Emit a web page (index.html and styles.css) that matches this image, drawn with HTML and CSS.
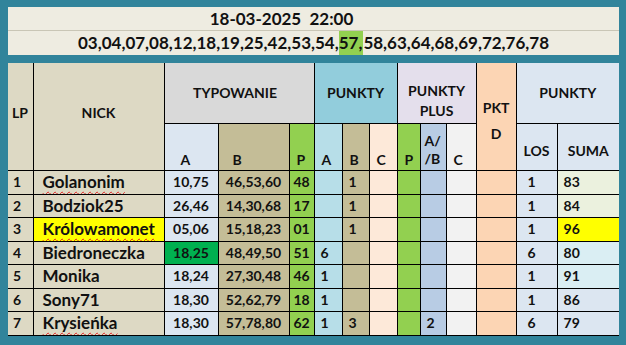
FILE: index.html
```html
<!DOCTYPE html>
<html lang="pl">
<head>
<meta charset="utf-8">
<title>Typowanie 18-03-2025</title>
<link rel="stylesheet" href="styles.css">
</head>
<body>
<div class="frame">
  <div class="draw">
    <div class="draw-date">18-03-2025  22:00</div>
    <div class="draw-nums"><span>03,04,07,08,12,18,19,25,42,53,54,</span><span class="hit">57,</span><span>58,63,64,68,69,72,76,78</span></div>
  </div>
  <table class="score">
    <colgroup>
      <col style="width:25px"><col style="width:131px"><col style="width:54px"><col style="width:71px"><col style="width:25px">
      <col style="width:28px"><col style="width:27px"><col style="width:28px">
      <col style="width:23px"><col style="width:26px"><col style="width:30px">
      <col style="width:40px"><col style="width:41px"><col style="width:62px">
    </colgroup>
    <thead>
      <tr class="h1">
        <th rowspan="2" class="lp-h tan">LP</th>
        <th rowspan="2" class="nick-h tan">NICK</th>
        <th colspan="3" class="grey mid typ">TYPOWANIE</th>
        <th colspan="3" class="aqua mid">PUNKTY</th>
        <th colspan="3" class="lav bot">PUNKTY<br>PLUS</th>
        <th rowspan="2" class="peach pktd"><span class="l1">PKT</span><span class="l2">D</span></th>
        <th colspan="2" class="lblue mid last">PUNKTY</th>
      </tr>
      <tr class="h2">
        <th class="lblue sub wide">A</th>
        <th class="khaki sub wide2">B</th>
        <th class="green sub">P</th>
        <th class="cyan sub">A</th>
        <th class="khaki sub">B</th>
        <th class="rose sub">C</th>
        <th class="green sub">P</th>
        <th class="steel sub ab">A/<br>/B</th>
        <th class="light sub">C</th>
        <th class="lblue ctr">LOS</th>
        <th class="lblue ctr last">SUMA</th>
      </tr>
    </thead>
    <tbody>
      <tr>
        <td class="tan lp">1</td><td class="tan nick"><span class="typo">Golanonim</span></td>
        <td class="lblue c">10,75</td><td class="khaki c">46,53,60</td><td class="green c">48</td>
        <td class="cyan n"></td><td class="khaki n">1</td><td class="rose n"></td>
        <td class="green n"></td><td class="steel n"></td><td class="light n"></td>
        <td class="peach"></td><td class="lblue los">1</td><td class="mint n last">83</td>
      </tr>
      <tr>
        <td class="tan lp">2</td><td class="tan nick">Bodziok25</td>
        <td class="lblue c">26,46</td><td class="khaki c">14,30,68</td><td class="green c">17</td>
        <td class="cyan n"></td><td class="khaki n">1</td><td class="rose n"></td>
        <td class="green n"></td><td class="steel n"></td><td class="light n"></td>
        <td class="peach"></td><td class="lblue los">1</td><td class="mint n last">84</td>
      </tr>
      <tr>
        <td class="tan lp">3</td><td class="yellow nick"><span class="typo">Królowamonet</span></td>
        <td class="lblue c">05,06</td><td class="khaki c">15,18,23</td><td class="green c">01</td>
        <td class="cyan n"></td><td class="khaki n">1</td><td class="rose n"></td>
        <td class="green n"></td><td class="steel n"></td><td class="light n"></td>
        <td class="peach"></td><td class="lblue los">1</td><td class="yellow n last">96</td>
      </tr>
      <tr>
        <td class="tan lp">4</td><td class="tan nick">Biedroneczka</td>
        <td class="dgreen c">18,25</td><td class="khaki c">48,49,50</td><td class="green c">51</td>
        <td class="cyan n">6</td><td class="khaki n"></td><td class="rose n"></td>
        <td class="green n"></td><td class="steel n"></td><td class="light n"></td>
        <td class="peach"></td><td class="lblue los">6</td><td class="sky n last">80</td>
      </tr>
      <tr>
        <td class="tan lp">5</td><td class="tan nick">Monika</td>
        <td class="lblue c">18,24</td><td class="khaki c">27,30,48</td><td class="green c">46</td>
        <td class="cyan n">1</td><td class="khaki n"></td><td class="rose n"></td>
        <td class="green n"></td><td class="steel n"></td><td class="light n"></td>
        <td class="peach"></td><td class="lblue los">1</td><td class="sky n last">91</td>
      </tr>
      <tr>
        <td class="tan lp">6</td><td class="tan nick">Sony71</td>
        <td class="lblue c">18,30</td><td class="khaki c">52,62,79</td><td class="green c">18</td>
        <td class="cyan n">1</td><td class="khaki n"></td><td class="rose n"></td>
        <td class="green n"></td><td class="steel n"></td><td class="light n"></td>
        <td class="peach"></td><td class="lblue los">1</td><td class="lblue n last">86</td>
      </tr>
      <tr>
        <td class="tan lp">7</td><td class="tan nick"><span class="typo">Krysieńka</span></td>
        <td class="lblue c">18,30</td><td class="khaki c">57,78,80</td><td class="green c">62</td>
        <td class="cyan n">1</td><td class="khaki n">3</td><td class="rose n"></td>
        <td class="green n"></td><td class="steel n">2</td><td class="light n"></td>
        <td class="peach"></td><td class="lblue los">6</td><td class="lblue n last">79</td>
      </tr>
    </tbody>
  </table>
</div>
</body>
</html>
```
FILE: styles.css
```css
html, body {
  margin: 0;
  padding: 0;
  background: #31849b;
}
body {
  font-family: "Lato", "Open Sans", sans-serif;
  font-weight: 700;
  color: #111;
}
.frame {
  padding: 7px 7px 0 8px;
  width: 611px;
  display: flex;
  flex-direction: column;
  gap: 8px;
}
.draw {
  background: #eeece1;
  display: flex;
  flex-direction: column;
}
.draw-date {
  height: 23px;
  line-height: 23px;
  font-size: 17px;
  text-align: center;
  white-space: pre;
  padding-right: 64px;
  border-bottom: 1px solid #c9c6b6;
}
.draw-nums {
  height: 24px;
  line-height: 24px;
  font-size: 17px;
  text-align: center;
  white-space: nowrap;
}
.draw-nums .hit {
  display: inline-block;
  background: #92d050;
  padding: 0 1px 0 0;
}
.score {
  border-collapse: collapse;
  table-layout: fixed;
  width: 611px;
  border: none;
}
.score th, .score td {
  border: 1px solid #000;
  padding: 0;
  overflow: hidden;
  white-space: nowrap;
}
.score th {
  font-size: 14px;
  font-weight: 700;
  line-height: 17px;
}
.score .h1 { height: 60px; }
.score .h2 { height: 47px; }
.score .h1 th { border-top: none; }
.score tr > :first-child { border-left: none; }
.score .last { border-right: none; }
.score tbody tr { height: 23px; }
.score tbody tr:nth-child(odd) { height: 24px; }

.score .lp-h { text-align: left; padding-left: 4px; padding-bottom: 7px; vertical-align: middle; }
.score .nick-h { text-align: center; padding-bottom: 7px; vertical-align: middle; }
.score .mid { text-align: center; vertical-align: middle; }
.score .typ { padding-right: 8px; }
.score .bot { text-align: center; vertical-align: bottom; line-height: 20px; padding-bottom: 2px; }
.score .pktd { text-align: center; vertical-align: middle; padding-top: 10px; }
.score .pktd span { display: block; line-height: 26px; }
.score .sub { text-align: left; vertical-align: bottom; padding: 0 0 2px 7px; }
.score .sub.wide { padding-left: 16px; }
.score .sub.wide2 { padding-left: 14px; }
.score .sub.ab { padding-left: 4px; line-height: 18px; }
.score .ctr { text-align: center; vertical-align: middle; padding-top: 8px; }

.score td { font-size: 14px; vertical-align: middle; line-height: 18px; }
.score .lp { padding-left: 5px; }
.score .nick { font-size: 17px; padding-left: 9px; line-height: 20px; }
.score .c { text-align: center; }
.score .n { text-align: left; padding-left: 6px; }
.score .los { text-align: left; padding-left: 11px; }
.typo {
  text-decoration: underline wavy #e02020;
  text-decoration-thickness: 1px;
  text-underline-offset: 3px;
  text-decoration-skip-ink: none;
}

.tan { background: #ddd9c4; }
.grey { background: #d9d9d9; }
.lblue { background: #dce6f1; }
.khaki { background: #c4bd97; }
.green { background: #92d050; }
.aqua { background: #92cddc; }
.cyan { background: #b7dee8; }
.rose { background: #fde9d9; }
.lav { background: #e4dfec; }
.steel { background: #b8cce4; }
.light { background: #f2f2f2; }
.peach { background: #fcd5b4; }
.mint { background: #ebf1de; }
.sky { background: #daeef3; }
.yellow { background: #ffff00; }
.dgreen { background: #00b050; }
```
